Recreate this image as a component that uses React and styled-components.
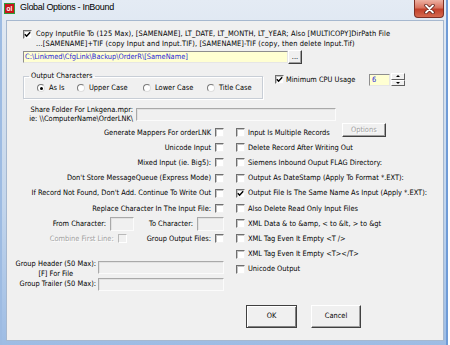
import React from 'react';
import styled, { createGlobalStyle } from 'styled-components';

const UI_FONT = `"DejaVu Sans Condensed", "Liberation Sans", Arial, sans-serif`;

const GlobalStyle = createGlobalStyle`
  html, body {
    margin: 0;
    padding: 0;
    background: #ffffff;
  }
  body {
    font-family: ${UI_FONT};
  }
  * {
    box-sizing: border-box;
  }
`;

const Window = styled.div`
  width: 450px;
  height: 345px;
  display: flex;
  flex-direction: column;
  padding: 0 6px 4px 6px;
  background: linear-gradient(180deg, #e4ebf4 0%, #d6e1ee 25%, #c2d5ec 60%, #9dbce4 100%);
  box-shadow: inset 2px 0 0 #9dbbe2, inset -2px 0 0 #ffffff, inset -4px 0 0 #6f9bd6;
`;

const TitleBar = styled.div`
  height: 20px;
  display: flex;
  align-items: flex-start;
  flex: none;
`;

const AppIcon = styled.svg`
  width: 11px;
  height: 11px;
  margin: 3px 0 0 -2px;
  flex: none;
`;

const Title = styled.div`
  font-family: "Liberation Sans", Arial, sans-serif;
  font-size: 9px;
  letter-spacing: -0.3px;
  line-height: 14px;
  color: #000;
  margin-left: 5px;
`;

const CloseButton = styled.div`
  margin-left: auto;
  margin-right: 0;
  width: 30px;
  height: 18px;
  border: 1px solid #7d2f24;
  border-top: none;
  border-radius: 0 0 4px 4px;
  background: linear-gradient(180deg, #eeb1a2 0%, #d97460 45%, #c2412b 55%, #d5694f 100%);
  display: flex;
  align-items: center;
  justify-content: center;
`;

const Client = styled.div`
  flex: 1;
  display: flex;
  flex-direction: column;
  background: #f0f0f0;
  border: 1px solid #a6b8cf;
  color: #000;
  font-size: 7.4px;
  line-height: 10px;
  white-space: nowrap;
`;

const Box = styled.span`
  flex: none;
  width: 9px;
  height: 9px;
  background: ${(p) => (p.$disabled ? '#f0f0f0' : '#ffffff')};
  border: 1px solid;
  border-color: ${(p) =>
    p.$disabled ? '#b8b8b8 #ffffff #ffffff #b8b8b8' : '#6f6f6f #f2f2f2 #f2f2f2 #6f6f6f'};
  box-shadow: ${(p) => (p.$disabled ? 'none' : 'inset 1px 1px 0 #c4c4c4')};
  display: flex;
  align-items: center;
  justify-content: center;
  margin-top: ${(p) => p.$top || 0}px;
`;

const Check = ({ checked, disabled, top }) => (
  <Box $disabled={disabled} $top={top}>
    {checked && (
      <svg width="7" height="7" viewBox="0 0 7 7">
        <polyline points="0.8,3.2 2.6,5.2 6.2,1.3" fill="none" stroke="#000" strokeWidth="1.5" />
      </svg>
    )}
  </Box>
);

const CopyRow = styled.div`
  display: flex;
  align-items: flex-start;
  gap: 4px;
  margin: 8px 0 0 16px;
`;

const CopyLabel = styled.div`
  line-height: 10px;
  letter-spacing: 0.12px;
`;

const PathRow = styled.div`
  display: flex;
  align-items: center;
  height: 14px;
  margin: 1px 0 0 16px;
`;

const YellowInput = styled.div`
  width: ${(p) => p.$w}px;
  height: 12px;
  background: #ffffd2;
  border: 1px solid;
  border-color: #8e8e8e #e6e6e6 #e6e6e6 #8e8e8e;
  color: #2727d8;
  padding-left: 1px;
  line-height: 10px;
`;

const PushButton = styled.div`
  width: ${(p) => p.$w}px;
  height: ${(p) => p.$h}px;
  flex: none;
  background: #f0f0f0;
  border: 1px solid;
  border-color: ${(p) => (p.$default ? '#404040' : '#ffffff #404040 #404040 #ffffff')};
  box-shadow: ${(p) =>
    p.$default
      ? 'inset 1px 1px 0 #ffffff, inset -1px -1px 0 #808080'
      : 'inset -1px -1px 0 #a0a0a0'};
  display: flex;
  align-items: center;
  justify-content: center;
  color: ${(p) => (p.$disabled ? '#a0a0a0' : '#000')};
  text-shadow: ${(p) => (p.$disabled ? '1px 1px 0 #ffffff' : 'none')};
  margin-left: ${(p) => p.$ml || 0}px;
  margin-bottom: ${(p) => p.$mb || 0}px;
`;

const OptionsRow = styled.div`
  display: flex;
  align-items: flex-start;
  margin: 7px 0 0 16px;
`;

const GroupBox = styled.fieldset`
  width: 240px;
  margin: 0;
  padding: 0 0 5px 5px;
  border: 1px solid #c8ced6;
  box-shadow: inset 1px 1px 0 #ffffff, 1px 1px 0 #ffffff;
`;

const Legend = styled.legend`
  padding: 0 2px;
  line-height: 10px;
`;

const RadioRow = styled.div`
  display: flex;
  height: 10px;
  align-items: center;
  margin: 2px 0 0 8px;
`;

const RadioItem = styled.div`
  display: flex;
  align-items: center;
  gap: 4px;
  width: ${(p) => (p.$w ? `${p.$w}px` : 'auto')};
`;

const RadioDot = styled.span`
  width: 8px;
  height: 8px;
  border-radius: 50%;
  background: #ffffff;
  border: 1px solid;
  border-color: #7a7a7a #dedede #dedede #7a7a7a;
  display: flex;
  align-items: center;
  justify-content: center;
  &::after {
    content: '';
    width: 3px;
    height: 3px;
    border-radius: 50%;
    background: ${(p) => (p.$on ? '#000' : 'transparent')};
  }
`;

const CpuGroup = styled.div`
  display: flex;
  align-items: center;
  height: 13px;
  margin: 2px 0 0 12px;
`;

const CpuLabel = styled.span`
  width: 85px;
  padding-left: 2px;
`;

const SpinInput = styled(YellowInput)`
  height: 12px;
  padding-left: 2px;
`;

const SpinButtons = styled.div`
  width: 14px;
  height: 13px;
  margin-left: 1px;
  display: flex;
  flex-direction: column;
`;

const SpinHalf = styled.div`
  flex: 1;
  background: #f0f0f0;
  border: 1px solid;
  border-color: #ffffff #606060 #606060 #ffffff;
  display: flex;
  align-items: center;
  justify-content: center;
  &::after {
    content: '';
    border-left: 2px solid transparent;
    border-right: 2px solid transparent;
    ${(p) => (p.$up ? 'border-bottom: 2px solid #000;' : 'border-top: 2px solid #000;')}
  }
`;

const ShareRow = styled.div`
  display: flex;
  align-items: center;
  margin: 6px 0 0 16px;
`;

const ShareLabel = styled.div`
  width: 110px;
  text-align: right;
  line-height: 9px;
`;

const TextBox = styled.div`
  flex: none;
  width: ${(p) => p.$w}px;
  height: ${(p) => p.$h || 13}px;
  margin-left: ${(p) => p.$ml || 0}px;
  margin-top: ${(p) => p.$mt || 0}px;
  background: #f0f0f0;
  border: 1px solid;
  border-color: #a9a9a9 #fbfbfb #fbfbfb #a9a9a9;
  box-shadow: inset 1px 1px 0 #e2e2e2;
`;

const Columns = styled.div`
  display: flex;
  gap: 12px;
  margin-top: 2px;
  padding-left: 8px;
`;

const LeftColumn = styled.div`
  width: 209px;
  display: flex;
  flex-direction: column;
`;

const LeftRow = styled.div`
  height: 15.2px;
  display: flex;
  align-items: center;
  justify-content: flex-end;
  gap: 4px;
`;

const FieldLabel = styled.span`
  color: ${(p) => (p.$disabled ? '#a0a0a0' : '#000')};
  text-shadow: ${(p) => (p.$disabled ? '1px 1px 0 #ffffff' : 'none')};
  margin-left: ${(p) => p.$ml || 0}px;
`;

const GroupRow = styled.div`
  display: flex;
  align-items: ${(p) => (p.$top ? 'flex-start' : 'center')};
  justify-content: flex-end;
  gap: 2px;
  margin-top: ${(p) => p.$mt || 0}px;
`;

const GroupLabel = styled.div`
  text-align: center;
  line-height: 10px;
`;

const RightColumn = styled.div`
  flex: 1;
  display: flex;
  flex-direction: column;
`;

const RightRow = styled.div`
  height: 15.2px;
  display: flex;
  align-items: center;
  gap: 3px;
`;

const ButtonBar = styled.div`
  display: flex;
  gap: 14px;
  margin: 28px 0 0 10px;
`;

const leftRows = [
  'Generate Mappers For orderLNK',
  'Unicode Input',
  'Mixed Input (ie. Big5):',
  "Don't Store MessageQueue (Express Mode)",
  "If Record Not Found, Don't Add. Continue To Write Out",
  'Replace Character In The Input File:',
];

const rightRows = [
  { text: 'Input Is Multiple Records', options: true },
  { text: 'Delete Record After Writing Out' },
  { text: 'Siemens Inbound Ouput FLAG Directory:' },
  { text: 'Output As DateStamp (Apply To Format *.EXT):' },
  { text: 'Output File Is The Same Name As Input (Apply *.EXT):', checked: true },
  { text: 'Also Delete Read Only Input Files' },
  { text: 'XML Data & to &amp, < to  &lt, > to &gt' },
  { text: 'XML Tag Even It Empty <T />' },
  { text: 'XML Tag Even It Empty <T></T>' },
  { text: 'Unicode Output' },
];

const radios = [
  { label: 'As Is', w: 40, on: true },
  { label: 'Upper Case', w: 66 },
  { label: 'Lower Case', w: 64 },
  { label: 'Title Case' },
];

export default function App() {
  return (
    <>
      <GlobalStyle />
      <Window>
        <TitleBar>
          <AppIcon viewBox="0 0 11 11">
            <rect x="0" y="0" width="11" height="11" fill="#2f9a3a" />
            <rect x="1" y="1" width="9" height="9" fill="#c8151b" />
            <text x="5.5" y="8" fontSize="6.5" fontWeight="bold" textAnchor="middle" fill="#ffffff" fontFamily="Liberation Sans, sans-serif">ol</text>
          </AppIcon>
          <Title>Global Options - InBound</Title>
          <CloseButton>
            <svg width="11" height="10" viewBox="0 0 11 10">
              <path d="M2 1.5 L9 8.5 M9 1.5 L2 8.5" stroke="#5a1e16" strokeWidth="3.4" strokeLinecap="round" />
              <path d="M2 1.5 L9 8.5 M9 1.5 L2 8.5" stroke="#ffffff" strokeWidth="1.8" strokeLinecap="round" />
            </svg>
          </CloseButton>
        </TitleBar>
        <Client>
          <CopyRow>
            <Check checked top={1} />
            <CopyLabel>
              Copy InputFile To (125 Max), [SAMENAME], LT_DATE, LT_MONTH, LT_YEAR; Also [MULTICOPY]DirPath File
              <br />
              ...[SAMENAME]+TIF (copy Input and Input.TIF), [SAMENAME]-TIF (copy, then delete Input.Tif)
            </CopyLabel>
          </CopyRow>
          <PathRow>
            <YellowInput $w={265}>C:\Linkmed\CfgLink\Backup\OrderR\[SameName]</YellowInput>
            <PushButton $w={14} $h={14}>...</PushButton>
          </PathRow>
          <OptionsRow>
            <GroupBox>
              <Legend>Output Characters</Legend>
              <RadioRow>
                {radios.map((r) => (
                  <RadioItem key={r.label} $w={r.w}>
                    <RadioDot $on={r.on} />
                    {r.label}
                  </RadioItem>
                ))}
              </RadioRow>
            </GroupBox>
            <CpuGroup>
              <Check checked />
              <CpuLabel>Minimum CPU Usage</CpuLabel>
              <SpinInput $w={21}>6</SpinInput>
              <SpinButtons>
                <SpinHalf $up />
                <SpinHalf />
              </SpinButtons>
            </CpuGroup>
          </OptionsRow>
          <ShareRow>
            <ShareLabel>
              Share Folder For Lnkgena.mpr:
              <br />
              ie: \\ComputerName\OrderLNK\
            </ShareLabel>
            <TextBox $w={200} $ml={3} />
          </ShareRow>
          <Columns>
            <LeftColumn>
              {leftRows.map((text) => (
                <LeftRow key={text}>
                  <FieldLabel>{text}</FieldLabel>
                  <Check />
                </LeftRow>
              ))}
              <LeftRow>
                <FieldLabel>From Character:</FieldLabel>
                <TextBox $w={24} $h={14} />
                <FieldLabel $ml={11}>To Character:</FieldLabel>
                <TextBox $w={27} $h={14} />
              </LeftRow>
              <LeftRow>
                <FieldLabel $disabled>Combine First Line:</FieldLabel>
                <Check disabled />
                <FieldLabel $ml={16}>Group Output Files:</FieldLabel>
                <Check />
              </LeftRow>
              <GroupRow $top $mt={12}>
                <GroupLabel>
                  Group Header (50 Max):
                  <br />
                  [F] For File
                </GroupLabel>
                <TextBox $w={126} $mt={2} />
              </GroupRow>
              <GroupRow $mt={-1}>
                <GroupLabel>Group Trailer (50 Max):</GroupLabel>
                <TextBox $w={126} />
              </GroupRow>
            </LeftColumn>
            <RightColumn>
              {rightRows.map((r) => (
                <RightRow key={r.text}>
                  <Check checked={r.checked} />
                  <FieldLabel>{r.text}</FieldLabel>
                  {r.options && (
                    <PushButton $w={44} $h={14} $ml={9} $mb={6} $disabled>
                      Options
                    </PushButton>
                  )}
                </RightRow>
              ))}
              <ButtonBar>
                <PushButton $w={51} $h={23} $default>OK</PushButton>
                <PushButton $w={50} $h={23}>Cancel</PushButton>
              </ButtonBar>
            </RightColumn>
          </Columns>
        </Client>
      </Window>
    </>
  );
}
